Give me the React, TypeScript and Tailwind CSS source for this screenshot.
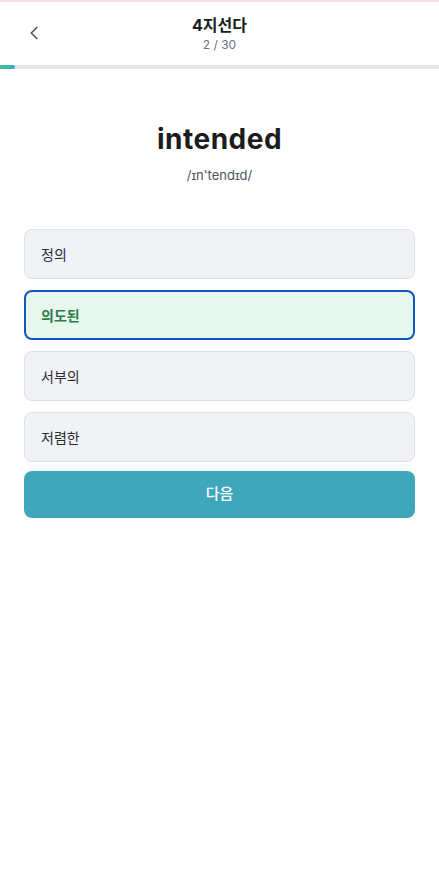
import { ChevronLeft } from "lucide-react";

const options = ["정의", "의도된", "서부의", "저렴한"];
const selected = 1;

export default function App() {
  const current = 2;
  const total = 30;
  const progress = ((current - 1) / total) * 100;

  return (
    <div
      className="min-h-[872px] w-full bg-white text-[#1f2329]"
      style={{ fontFamily: "Inter, 'Noto Sans CJK KR', sans-serif" }}
    >
      {/* Header */}
      <div className="border-t-2 border-[#f8e1e3]">
        <div className="relative flex h-[63px] flex-col items-center justify-center">
          <button className="absolute left-[22px] top-[19px] flex h-6 w-6 items-center justify-center text-[#4b5563]">
            <ChevronLeft size={22} strokeWidth={1.8} />
          </button>
          <div className="text-[16px] font-bold leading-5 text-[#1a1c20]">4지선다</div>
          <div className="mt-[2px] text-[12px] leading-4 text-[#6b7280]">
            {current} / {total}
          </div>
        </div>
        <div className="h-[4px] w-full bg-[#e3e5e9]">
          <div
            className="h-full rounded-r-full bg-gradient-to-r from-[#3dbf9f] to-[#3fa7bc]"
            style={{ width: `${progress}%` }}
          />
        </div>
      </div>

      {/* Word */}
      <div className="flex flex-col items-center pt-[52px]">
        <div className="text-[28px] font-bold leading-9 tracking-[0.5px] text-[#1a1c20]">intended</div>
        <div className="mt-[8px] text-[13px] leading-5 text-[#4b5563]">/ɪn'tendɪd/</div>
      </div>

      {/* Options */}
      <div className="mt-[44px] flex flex-col gap-[11px] px-6">
        {options.map((opt, i) =>
          i === selected ? (
            <div
              key={opt}
              className="flex h-[50px] items-center rounded-[8px] border-2 border-[#0f56c0] bg-[#e7f7ee] px-[15px] text-[14px] font-bold text-[#2b7a46]"
            >
              {opt}
            </div>
          ) : (
            <div
              key={opt}
              className="flex h-[50px] items-center rounded-[8px] border border-[#dde0e5] bg-[#f1f2f6] px-4 text-[14px] text-[#2a2d33]"
            >
              {opt}
            </div>
          )
        )}
      </div>

      <div className="mt-[9px] px-6">
        <button className="flex h-[47px] w-full items-center justify-center rounded-[8px] bg-[#3fa7bc] text-[15px] font-medium text-white">
          다음
        </button>
      </div>
    </div>
  );
}
